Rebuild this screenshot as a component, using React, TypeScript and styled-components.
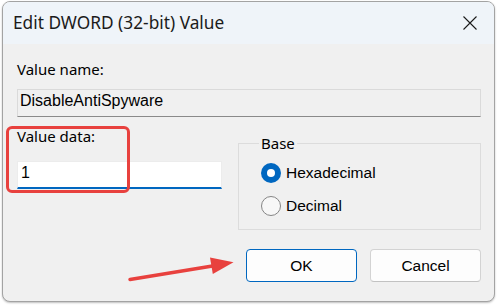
import React from "react";
import styled, { createGlobalStyle } from "styled-components";

const GlobalStyle = createGlobalStyle`
  html, body { margin: 0; padding: 0; background: #ffffff; }
  body { width: 497px; height: 305px; overflow: hidden; }
  * { box-sizing: border-box; }
`;

const SEGOE = `"Noto Sans", "Open Sans", sans-serif`;
const MSSANS = `"Liberation Sans", Arial, sans-serif`;

const Page = styled.div`
  position: relative;
  width: 497px;
  height: 305px;
  padding: 1px 2px 0 2px;
`;

const Window = styled.div`
  width: 493px;
  height: 301px;
  border: 1px solid #a3a3a3;
  border-radius: 8px;
  overflow: hidden;
  display: flex;
  flex-direction: column;
  background: #f0f0f0;
  box-shadow: 0 1px 2px rgba(0, 0, 0, 0.25);
`;

const TitleBar = styled.div`
  height: 42px;
  flex: none;
  background: #eff4f9;
  display: flex;
  align-items: center;
  justify-content: space-between;
  padding: 0 17px 0 10px;
`;

const Title = styled.span`
  font-family: ${SEGOE};
  font-size: 17.3px;
  color: #1b1b1b;
  line-height: 20px;
`;

const CloseIcon = styled.svg`
  width: 14px;
  height: 14px;
  display: block;
`;

const Body = styled.div`
  flex: 1;
  display: flex;
  flex-direction: column;
  padding: 15px 13px 0 14px;
`;

const Label = styled.div`
  font-family: ${SEGOE};
  font-size: 15px;
  line-height: 20px;
  color: #000;
`;

const Field = styled.div<{ $editable?: boolean; $width?: number }>`
  height: 28px;
  width: ${(p) => (p.$width ? `${p.$width}px` : "auto")};
  font-family: ${MSSANS};
  font-size: 16px;
  color: #000;
  line-height: 22px;
  padding: ${(p) => (p.$editable ? "0 0 3px 3px" : "0 0 4px 2px")};
  display: flex;
  align-items: center;
  background: ${(p) => (p.$editable ? "#ffffff" : "#f0f0f0")};
  border: 1px solid ${(p) => (p.$editable ? "#ececec" : "#dadada")};
  border-bottom: ${(p) => (p.$editable ? "2px solid #0067c0" : "1px solid #8a8a8a")};
`;

const NameField = styled(Field)`
  margin-top: 10px;
`;

const Row = styled.div`
  display: flex;
  gap: 16px;
  margin-top: 9px;
`;

const LeftCol = styled.div`
  width: 205px;
  display: flex;
  flex-direction: column;
  gap: 15px;
`;

const Group = styled.fieldset`
  flex: 1;
  margin: 7px 0 0 0;
  height: 97px;
  border: 1px solid #dcdcdc;
  padding: 8px 0 0 22px;
  min-width: 0;
  display: flex;
  flex-direction: column;
  gap: 9px;
`;

const Legend = styled.legend`
  font-family: ${SEGOE};
  font-size: 15px;
  line-height: 20px;
  padding: 0 2px;
  margin-left: -2px;
  color: #000;
`;

const RadioRow = styled.div`
  display: flex;
  align-items: center;
  gap: 5px;
  height: 24px;
  font-family: ${MSSANS};
  font-size: 15.5px;
  color: #000;
`;

const RadioDot = styled.span<{ $checked?: boolean }>`
  width: 20px;
  height: 20px;
  border-radius: 50%;
  flex: none;
  display: flex;
  align-items: center;
  justify-content: center;
  background: ${(p) => (p.$checked ? "#0067c0" : "#f7f7f7")};
  border: ${(p) => (p.$checked ? "none" : "1px solid #858585")};
  &::after {
    content: "";
    display: ${(p) => (p.$checked ? "block" : "none")};
    width: 8px;
    height: 8px;
    border-radius: 50%;
    background: #ffffff;
  }
`;

const Buttons = styled.div`
  display: flex;
  justify-content: flex-end;
  gap: 13px;
  margin-top: 19px;
`;

const Button = styled.button<{ $primary?: boolean }>`
  width: 111px;
  height: 33px;
  border-radius: 4px;
  background: #fdfdfd;
  border: 1px solid ${(p) => (p.$primary ? "#0067c0" : "#d3d3d3")};
  border-bottom-color: ${(p) => (p.$primary ? "#0067c0" : "#c2c2c2")};
  font-family: ${MSSANS};
  font-size: 15.5px;
  color: #000;
  padding: 0;
  cursor: default;
`;

const Highlight = styled.div`
  position: absolute;
  left: 6px;
  top: 126px;
  width: 124px;
  height: 67px;
  border: 3px solid #e8413e;
  border-radius: 6px;
  pointer-events: none;
`;

const Arrow = styled.svg`
  position: absolute;
  left: 0;
  top: 0;
  width: 497px;
  height: 305px;
  pointer-events: none;
`;

export default function App() {
  return (
    <>
      <GlobalStyle />
      <Page>
        <Window>
          <TitleBar>
            <Title>Edit DWORD (32-bit) Value</Title>
            <CloseIcon viewBox="0 0 14 14">
              <path d="M0.5 0.5 L13.5 13.5 M13.5 0.5 L0.5 13.5" stroke="#1b1b1b" strokeWidth="1.1" fill="none" />
            </CloseIcon>
          </TitleBar>
          <Body>
            <Label>Value name:</Label>
            <NameField>DisableAntiSpyware</NameField>
            <Row>
              <LeftCol>
                <Label>Value data:</Label>
                <Field $editable $width={205}>1</Field>
              </LeftCol>
              <Group>
                <Legend>Base</Legend>
                <RadioRow>
                  <RadioDot $checked />
                  Hexadecimal
                </RadioRow>
                <RadioRow>
                  <RadioDot />
                  Decimal
                </RadioRow>
              </Group>
            </Row>
            <Buttons>
              <Button $primary>OK</Button>
              <Button>Cancel</Button>
            </Buttons>
          </Body>
        </Window>
        <Highlight />
        <Arrow viewBox="0 0 497 305">
          <line x1="130" y1="279.5" x2="214" y2="265.7" stroke="#e8413e" strokeWidth="3.5" strokeLinecap="round" />
          <polygon points="233.5,262.3 210,257.5 212.8,274" fill="#e8413e" />
        </Arrow>
      </Page>
    </>
  );
}
